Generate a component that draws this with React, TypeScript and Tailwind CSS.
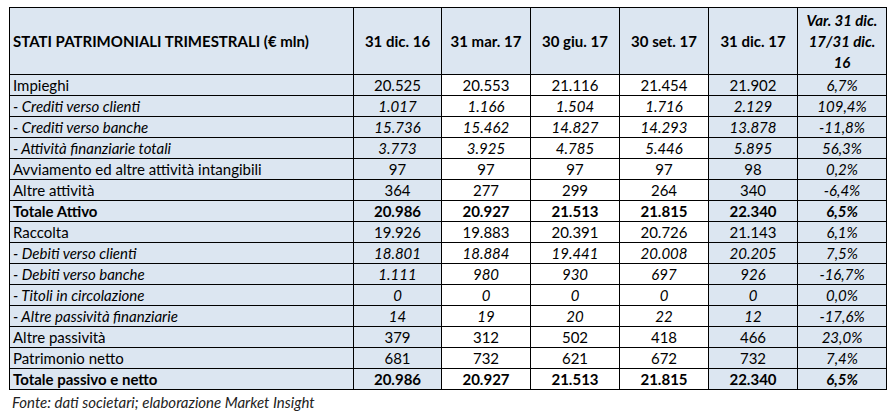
import React from 'react';

type Row = {
  label: string;
  values: string[];
  variation: string;
  kind?: 'italic' | 'bold';
};

const rows: Row[] = [
  { label: 'Impieghi', values: ['20.525', '20.553', '21.116', '21.454', '21.902'], variation: '6,7%' },
  { label: '- Crediti verso clienti', values: ['1.017', '1.166', '1.504', '1.716', '2.129'], variation: '109,4%', kind: 'italic' },
  { label: '- Crediti verso banche', values: ['15.736', '15.462', '14.827', '14.293', '13.878'], variation: '-11,8%', kind: 'italic' },
  { label: '- Attività finanziarie totali', values: ['3.773', '3.925', '4.785', '5.446', '5.895'], variation: '56,3%', kind: 'italic' },
  { label: 'Avviamento ed altre attività intangibili', values: ['97', '97', '97', '97', '98'], variation: '0,2%' },
  { label: 'Altre attività', values: ['364', '277', '299', '264', '340'], variation: '-6,4%' },
  { label: 'Totale Attivo', values: ['20.986', '20.927', '21.513', '21.815', '22.340'], variation: '6,5%', kind: 'bold' },
  { label: 'Raccolta', values: ['19.926', '19.883', '20.391', '20.726', '21.143'], variation: '6,1%' },
  { label: '- Debiti verso clienti', values: ['18.801', '18.884', '19.441', '20.008', '20.205'], variation: '7,5%', kind: 'italic' },
  { label: '- Debiti verso banche', values: ['1.111', '980', '930', '697', '926'], variation: '-16,7%', kind: 'italic' },
  { label: '- Titoli in circolazione', values: ['0', '0', '0', '0', '0'], variation: '0,0%', kind: 'italic' },
  { label: '- Altre passività finanziarie', values: ['14', '19', '20', '22', '12'], variation: '-17,6%', kind: 'italic' },
  { label: 'Altre passività', values: ['379', '312', '502', '418', '466'], variation: '23,0%' },
  { label: 'Patrimonio netto', values: ['681', '732', '621', '672', '732'], variation: '7,4%' },
  { label: 'Totale passivo e netto', values: ['20.986', '20.927', '21.513', '21.815', '22.340'], variation: '6,5%', kind: 'bold' },
];

const periods = ['31 dic. 16', '31 mar. 17', '30 giu. 17', '30 set. 17', '31 dic. 17'];
// columns with the pale blue fill (index into values)
const shaded = [true, false, false, false, true];

const App: React.FC = () => {
  return (
    <div className="w-[896px] h-[413px] bg-white pt-[7px] pl-[9px] text-black font-['Lato','Noto_Sans',sans-serif] text-[15px]">
      <table className="table-fixed border-collapse w-[877px]">
        <colgroup>
          <col className="w-[344px]" />
          <col className="w-[88px]" />
          <col className="w-[89px]" />
          <col className="w-[89px]" />
          <col className="w-[89px]" />
          <col className="w-[89px]" />
          <col className="w-[89px]" />
        </colgroup>
        <thead>
          <tr className="h-[67px] bg-[#dce6f1]">
            <th className="border border-black px-[3px] text-left font-bold">STATI PATRIMONIALI TRIMESTRALI (€ mln)</th>
            {periods.map((p) => (
              <th key={p} className="border border-black px-1 text-center font-bold">
                {p}
              </th>
            ))}
            <th className="border border-black px-1 text-center font-bold italic leading-[21px]">
              Var. 31 dic. 17/31 dic. 16
            </th>
          </tr>
        </thead>
        <tbody>
          {rows.map((row) => {
            const style = row.kind === 'bold' ? 'font-bold' : row.kind === 'italic' ? 'italic' : '';
            return (
              <tr key={row.label} className="h-[21px] leading-[19px]">
                <td className={`border border-black bg-[#dce6f1] px-[3px] whitespace-nowrap ${style}`}>{row.label}</td>
                {row.values.map((v, i) => (
                  <td
                    key={i}
                    className={`border border-black text-center ${shaded[i] ? 'bg-[#dce6f1]' : 'bg-white'} ${style}`}
                  >
                    {v}
                  </td>
                ))}
                <td className={`border border-black bg-[#dce6f1] text-center italic ${row.kind === 'bold' ? 'font-bold' : ''}`}>
                  {row.variation}
                </td>
              </tr>
            );
          })}
        </tbody>
      </table>
      <p className="mt-[1px] pl-[3px] italic text-[15px] text-[#222]">Fonte: dati societari; elaborazione Market Insight</p>
    </div>
  );
};

export default App;
